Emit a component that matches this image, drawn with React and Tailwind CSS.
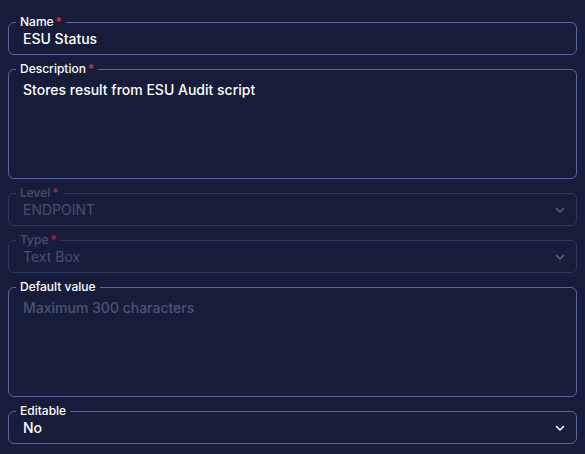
import React from "react";

function Chevron({ disabled }) {
  return (
    <svg width="12" height="12" viewBox="0 0 12 12" fill="none" className={disabled ? "text-[#5b6484]" : "text-white"}>
      <path d="M2.5 4.5L6 8L9.5 4.5" stroke="currentColor" strokeWidth="1.6" strokeLinecap="round" strokeLinejoin="round" />
    </svg>
  );
}

function Field({ label, required, disabled, children, tall }) {
  return (
    <fieldset
      className={`border rounded-md pl-[7px] pr-[10px] m-0 min-w-0 ${
        disabled ? "border-[#2f3a62]" : "border-[#56679c]"
      } ${tall ? "h-[117px]" : "h-[40px]"}`}
    >
      <legend
        className={`px-1 text-[12px] leading-[14px] font-medium ${
          disabled ? "text-[#465171]" : "text-white"
        }`}
      >
        {label}
        {required && (
          <span className={`ml-[2px] ${disabled ? "text-[#a8283a]" : "text-[#e0303f]"}`}>*</span>
        )}
      </legend>
      {children}
    </fieldset>
  );
}

export default function App() {
  return (
    <div
      className="w-[585px] h-[454px] bg-[#161c3a] px-2 pt-[15px] flex flex-col gap-[7px]"
      style={{ fontFamily: "Inter, 'Noto Sans', sans-serif" }}
    >
      <Field label="Name" required>
        <div className="pl-[7px] text-[14px] leading-[20px] font-medium text-white">ESU Status</div>
      </Field>
      <Field label="Description" required tall>
        <div className="pl-[7px] pt-[4px] text-[14px] leading-[20px] font-medium text-white">
          Stores result from ESU Audit script
        </div>
      </Field>
      <Field label="Level" required disabled>
        <div className="pl-[7px] flex items-center justify-between text-[14px] leading-[20px] text-[#465171]">
          <span>ENDPOINT</span>
          <Chevron disabled />
        </div>
      </Field>
      <Field label="Type" required disabled>
        <div className="pl-[7px] flex items-center justify-between text-[14px] leading-[20px] text-[#465171]">
          <span>Text Box</span>
          <Chevron disabled />
        </div>
      </Field>
      <Field label="Default value" tall>
        <div className="pl-[7px] pt-[4px] text-[14px] leading-[20px] font-medium text-[#4a5575]">
          Maximum 300 characters
        </div>
      </Field>
      <Field label="Editable">
        <div className="pl-[7px] flex items-center justify-between text-[14px] leading-[20px] font-medium text-white">
          <span>No</span>
          <Chevron />
        </div>
      </Field>
    </div>
  );
}
